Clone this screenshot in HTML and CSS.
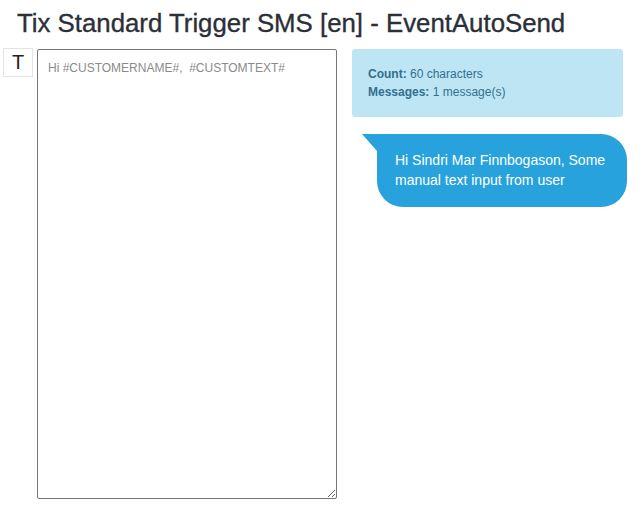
FILE: index.html
```html
<!DOCTYPE html>
<html>
<head>
<meta charset="utf-8">
<link rel="stylesheet" href="styles.css">
</head>
<body>
<h1 class="title">Tix Standard Trigger SMS [en] - EventAutoSend</h1>
<div class="row">
  <div class="editor">
    <div class="tbtn">T</div>
    <textarea class="msg" placeholder="Hi #CUSTOMERNAME#,  #CUSTOMTEXT#"></textarea>
  </div>
  <div class="side">
    <div class="info">
      <div><b>Count:</b> 60 characters</div>
      <div><b>Messages:</b> 1 message(s)</div>
    </div>
    <div class="bubble">Hi Sindri Mar Finnbogason, Some manual text input from user</div>
  </div>
</div>
</body>
</html>
```
FILE: styles.css
```css
html, body {
  margin: 0;
  padding: 0;
  background: #fff;
  font-family: "Liberation Sans", Arial, sans-serif;
}
.title {
  margin: 0;
  padding: 8px 0 0 17px;
  height: 40px;
  box-sizing: border-box;
  font-size: 25.8px;
  font-weight: normal;
  color: #2b2f38;
  line-height: 30px;
  -webkit-text-stroke: 0.35px #2b2f38;
}
.row {
  display: flex;
  padding: 8px 0 0 3px;
  gap: 15px;
}
.editor {
  display: flex;
  gap: 4px;
  align-items: flex-start;
}
.tbtn {
  width: 30px;
  height: 29px;
  box-sizing: border-box;
  border: 1px solid #e3e3e3;
  font-size: 20px;
  line-height: 27px;
  text-align: center;
  color: #222;
}
.msg {
  width: 300px;
  height: 450px;
  box-sizing: border-box;
  margin: 1px 0 0 0;
  border: 1px solid #767676;
  border-radius: 2px;
  padding: 10px 10px;
  font-family: "Liberation Sans", Arial, sans-serif;
  font-size: 12px;
  line-height: 16px;
  resize: vertical;
}
.msg::placeholder {
  color: #8a8a8a;
}
.side {
  display: flex;
  flex-direction: column;
  padding-top: 1px;
}
.info {
  width: 271px;
  height: 68px;
  box-sizing: border-box;
  background: #bee5f4;
  border-radius: 3px;
  padding: 16px 16px 14px;
  color: #31708f;
  font-size: 12px;
  line-height: 18px;
}
.info b {
  font-weight: bold;
}
.bubble {
  position: relative;
  margin: 17px 0 0 25px;
  width: 250px;
  box-sizing: border-box;
  background: #27a2dc;
  color: #fff;
  font-size: 14px;
  line-height: 20px;
  padding: 16px 18px 17px 18px;
  border-radius: 0 26px 26px 26px;
}
.bubble::before {
  content: "";
  position: absolute;
  left: -15px;
  top: 0;
  border-top: 17px solid #27a2dc;
  border-left: 15px solid transparent;
}
```
